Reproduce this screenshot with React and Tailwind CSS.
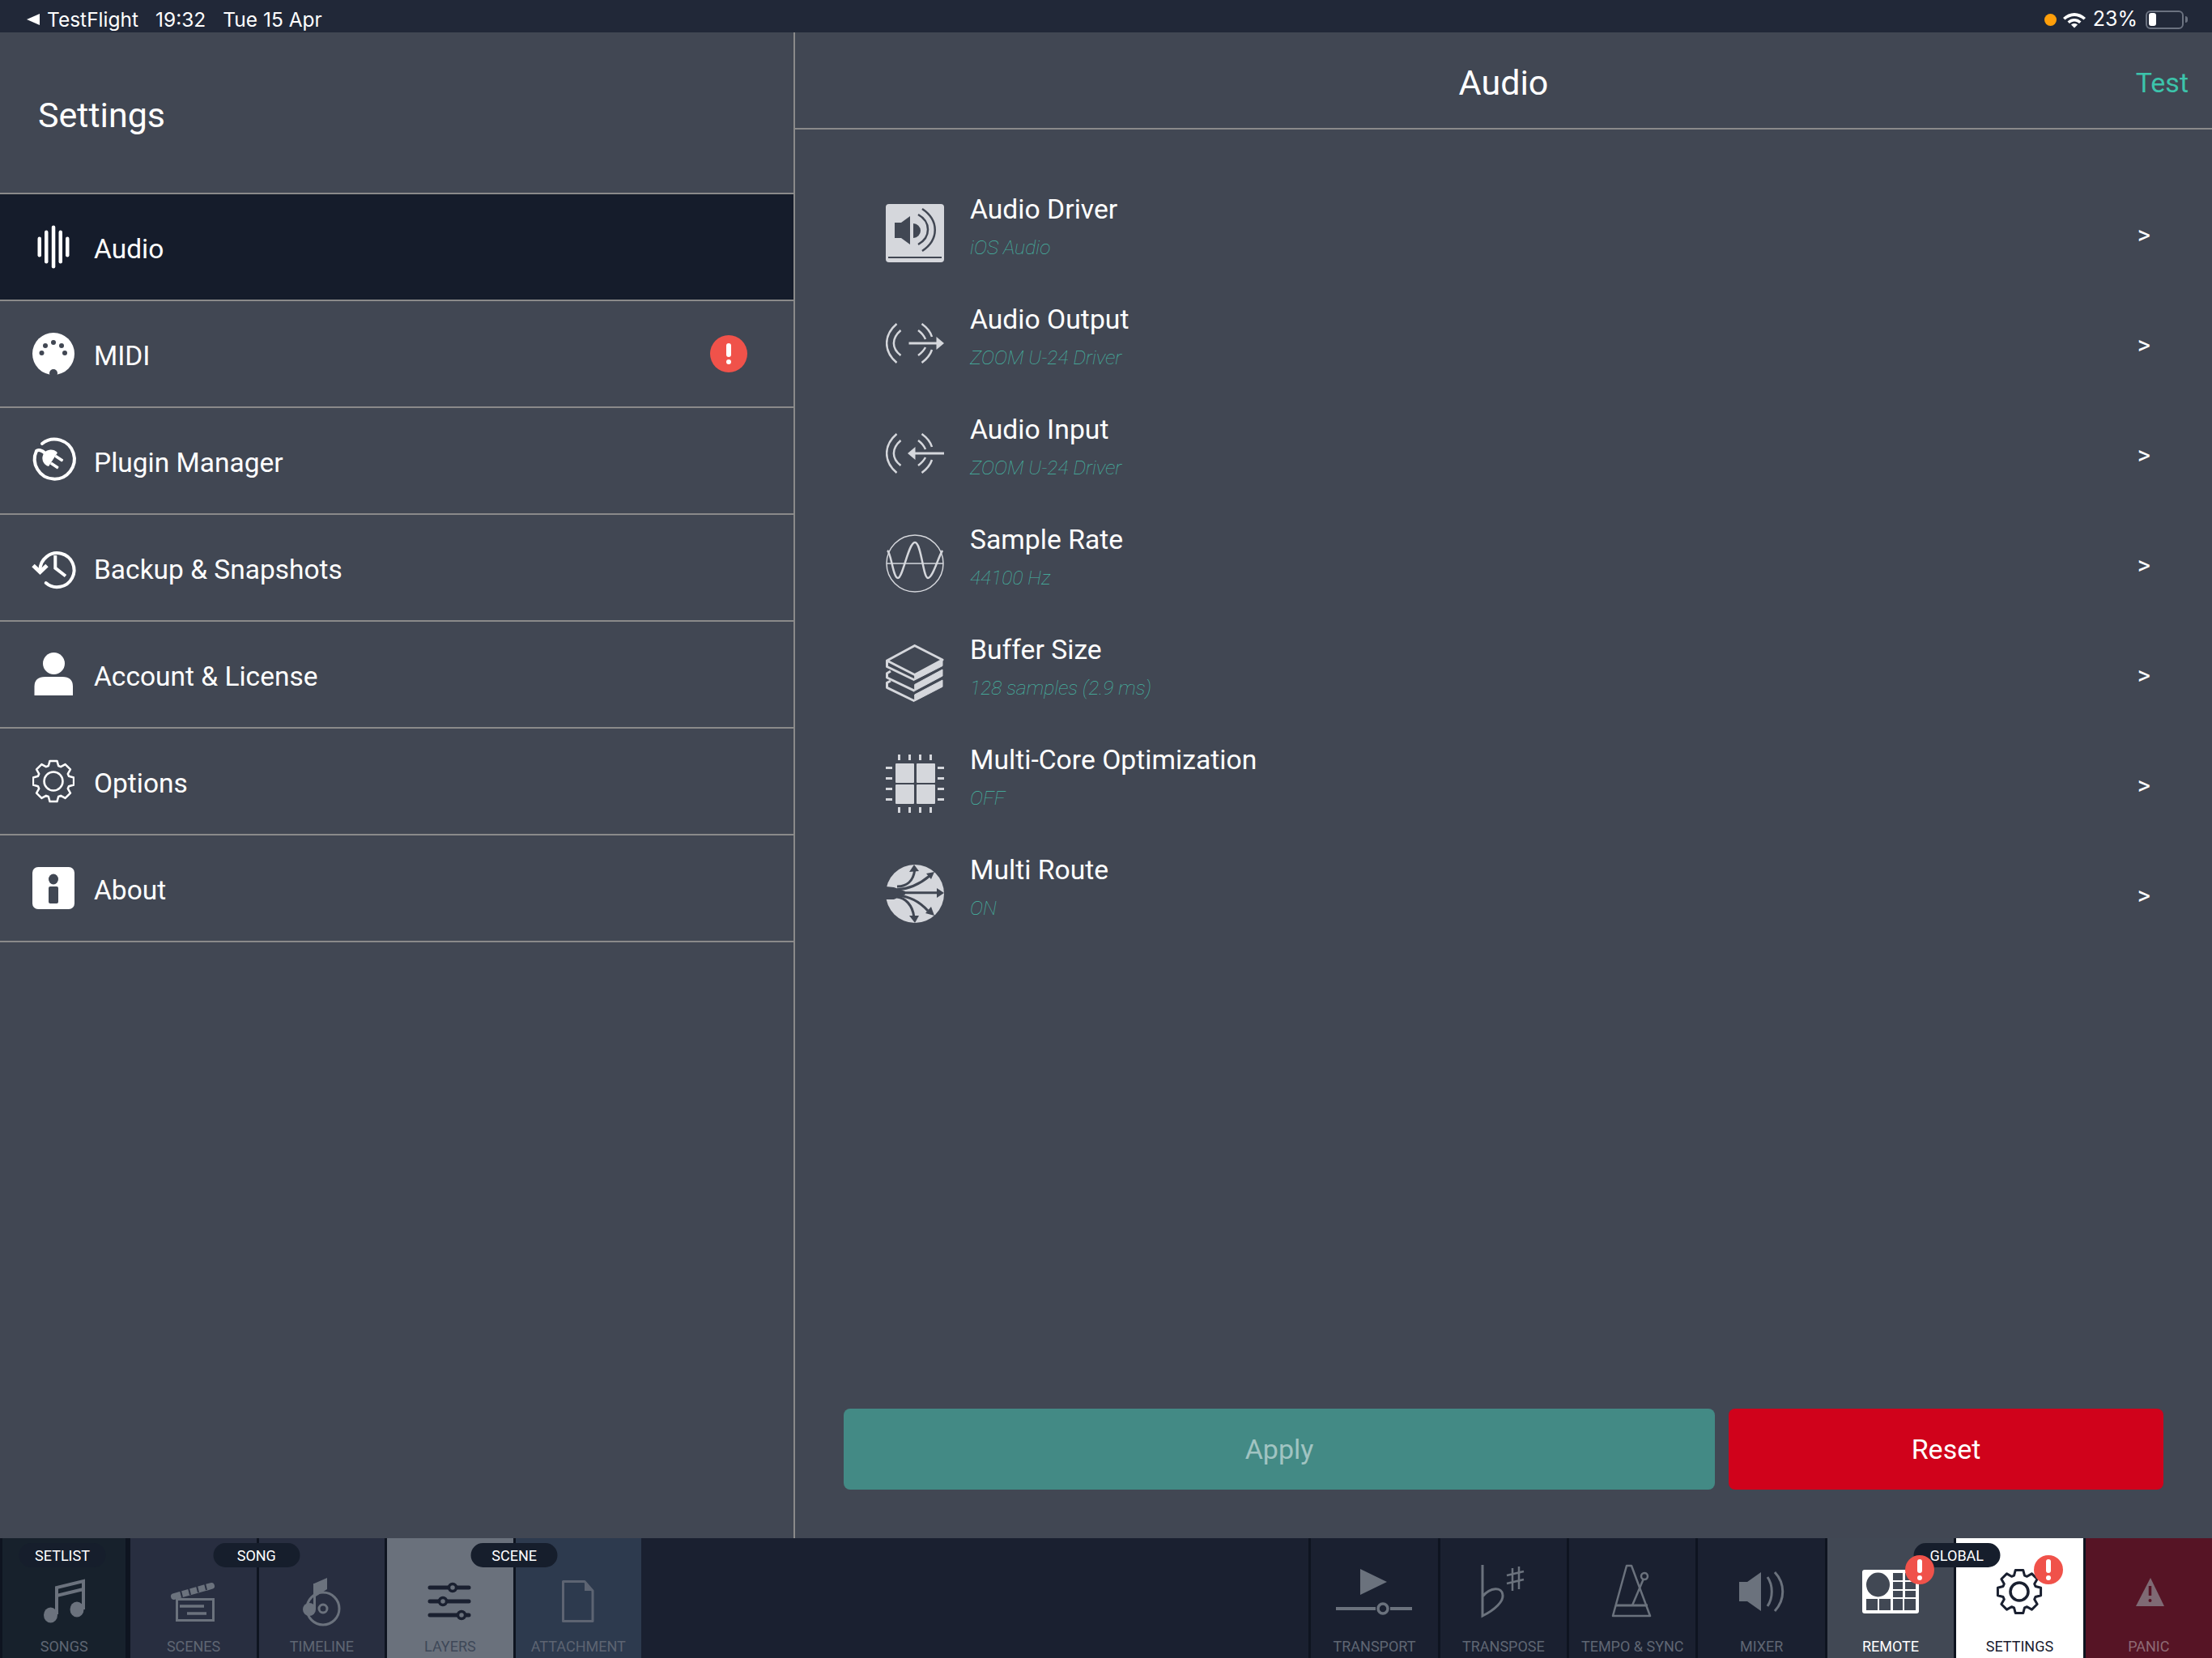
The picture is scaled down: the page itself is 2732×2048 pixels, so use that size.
import { Fragment } from "react";

// gear outline used by Options + Settings
function gearPath(cx, cy, rOut, rIn, teeth) {
  const pts = [];
  const step = (Math.PI * 2) / teeth;
  for (let i = 0; i < teeth; i++) {
    const a = i * step - Math.PI / 2;
    const d = [
      [-0.5, rIn],
      [-0.28, rOut],
      [0.28, rOut],
      [0.5, rIn],
    ];
    d.forEach(([k, r]) => {
      const t = a + k * step * 0.8;
      pts.push(`${(cx + Math.cos(t) * r).toFixed(2)} ${(cy + Math.sin(t) * r).toFixed(2)}`);
    });
  }
  return "M" + pts.join("L") + "Z";
}

const BG = "#414753";

/* ---------- left menu icons, 52 box ---------- */
const AudioIcon = () => (
  <svg width="52" height="54" viewBox="0 0 52 54" fill="#fff">
    <rect x="6.500" y="14.500" width="4.500" height="25" rx="2.200" />
    <rect x="15" y="6.500" width="4.500" height="41" rx="2.200" />
    <rect x="23.800" y="0.500" width="4.500" height="53" rx="2.200" />
    <rect x="32.500" y="6.500" width="4.500" height="41" rx="2.200" />
    <rect x="41" y="14.500" width="4.500" height="25" rx="2.200" />
  </svg>
);
const MidiIcon = () => (
  <svg width="52" height="52" viewBox="0 0 52 52">
    <circle cx="26" cy="26" r="26" fill="#fff" />
    <g fill={BG}>
      <circle cx="26" cy="12" r="3" />
      <circle cx="16" cy="16" r="3" />
      <circle cx="36" cy="16" r="3" />
      <circle cx="11.500" cy="25" r="3" />
      <circle cx="40" cy="25" r="3" />
      <circle cx="26" cy="50" r="5" />
    </g>
  </svg>
);
const PluginIcon = () => (
  <svg width="52" height="56" viewBox="0 0 52 56" fill="none" className="overflow-visible">
    <path d="M12 7 A24.500 24.500 0 1 1 5 16 C7 14 12 15 16 19" stroke="#fff" strokeWidth="4" strokeLinecap="round" />
    <g transform="translate(23 25) rotate(33)" fill="#fff">
      <path d="M3 -10 A10.500 10.500 0 1 0 3 10 Z" />
      <rect x="3" y="-7" width="11" height="3.500" rx="1" />
      <rect x="3" y="3.500" width="11" height="3.500" rx="1" />
    </g>
  </svg>
);
const BackupIcon = () => (
  <svg width="52" height="48" viewBox="0 0 52 48" fill="none" className="overflow-visible">
    <path d="M9.500 27 A21 21 0 1 1 16.700 43" stroke="#fff" strokeWidth="4" strokeLinecap="round" />
    <path d="M1 21.500 L9.500 29.500 L18 21.500" stroke="#fff" strokeWidth="5" />
    <path d="M28.300 9 V24.700 L41 34.500" stroke="#fff" strokeWidth="4" />
  </svg>
);
const AccountIcon = () => (
  <svg width="52" height="54" viewBox="0 0 52 54" fill="#fff">
    <ellipse cx="26.500" cy="13.500" rx="13.500" ry="13.500" />
    <path d="M2.500 53 V42 Q2.500 30 16 30 H37 Q50 30 50 42 V53 Z" />
  </svg>
);
const OptionsIcon = () => (
  <svg width="52" height="54" viewBox="0 0 52 54" fill="none" stroke="#fff" strokeWidth="2.500" strokeLinejoin="round">
    <path d={gearPath(26, 27, 25.5, 20, 8)} />
    <circle cx="26" cy="27" r="11.500" />
  </svg>
);
const AboutIcon = () => (
  <svg width="52" height="52" viewBox="0 0 52 52">
    <rect width="52" height="52" rx="7" fill="#fff" />
    <ellipse cx="26" cy="15" rx="6" ry="6.500" fill={BG} />
    <rect x="20" y="24" width="12" height="21" rx="2" fill={BG} />
  </svg>
);

/* ---------- audio list icons, 72 box ---------- */
const ICON = "#d5d7dc";

const DriverIcon = () => (
  <svg width="72" height="72" viewBox="0 0 72 72" fill="none">
    <rect width="72" height="72" rx="4" fill={ICON} />
    <rect x="3" y="65" width="66" height="2" fill={BG} />
    <path d="M11 23 H19 L30 15 V50 L19 42 H11 Z" fill={BG} />
    <path d="M34 24 A9 9 0 0 1 34 42 Z" fill={BG} />
    <g stroke={BG} strokeWidth="2.500">
      <path d="M40 13 C56 22 56 41 40 50" />
      <path d="M45 6 C66 20 66 44 45 58" />
    </g>
  </svg>
);
const ArcPair = () => (
  <g stroke={ICON} strokeWidth="2.500" fill="none">
    <path d="M13.500 12 C-3 26 -3 46 13.500 60" />
    <path d="M18.500 20 C7 30 7 42 18.500 51" />
    <path d="M44.500 12 C50 16 55 21 57 28" />
    <path d="M57 44 C55 50 50 56 44.500 60" />
    <path d="M40 20 C44 23 47 26 49 31" />
    <path d="M49 41 C47 45 44 48 40 51" />
  </g>
);
const OutputIcon = () => (
  <svg width="72" height="72" viewBox="0 0 72 72" fill="none">
    <ArcPair />
    <rect x="28.500" y="34.500" width="36" height="3" fill={ICON} />
    <path d="M62.500 28 L72 36 L62.500 44 Z" fill={ICON} />
  </svg>
);
const InputIcon = () => (
  <svg width="72" height="72" viewBox="0 0 72 72" fill="none">
    <ArcPair />
    <rect x="34" y="34.500" width="38" height="3" fill={ICON} />
    <path d="M36.500 28 L27 36 L36.500 44 Z" fill={ICON} />
  </svg>
);
const RateIcon = () => (
  <svg width="72" height="72" viewBox="0 0 72 72" fill="none" stroke={ICON}>
    <circle cx="36" cy="36" r="35" strokeWidth="1.500" />
    <path d="M1 36 H71" strokeWidth="1.500" />
    <path d="M2 20 C7 24 9 54 15 54 S28 10 36 10 S46 54 52 54 S64 30 70 20" strokeWidth="2.500" />
  </svg>
);
const BufferIcon = () => (
  <svg width="72" height="72" viewBox="0 0 72 72" fill="none" stroke={ICON} strokeWidth="3" strokeLinejoin="round">
    <path d="M35.700 1.500 L70 19 L35.700 37.500 L1.500 20 Z" />
    <path d="M1.500 20 V27.500 L35.700 44" />
    <path d="M35.700 37.500 L70 19 V26.500 L35.700 44 Z" fill={ICON} strokeWidth="1" />
    <path d="M6 33 L1.500 35.700 V41 L35.700 57.300" />
    <path d="M35.700 49.500 L70 31 V39 L35.700 57.300 Z" fill={ICON} strokeWidth="1" />
    <path d="M6 45 L1.500 47.300 V53.300 L35.700 70" />
    <path d="M35.700 62 L70 44 V52.300 L35.700 70 Z" fill={ICON} strokeWidth="1" />
  </svg>
);
const CoreIcon = () => (
  <svg width="72" height="72" viewBox="0 0 72 72" fill={ICON}>
    <rect x="12" y="11" width="23" height="24" rx="1" />
    <rect x="38" y="11" width="23" height="24" rx="1" />
    <rect x="12" y="37" width="23" height="24" rx="1" />
    <rect x="38" y="37" width="23" height="24" rx="1" />
    {[15, 28, 41, 54].map((p) => (
      <Fragment key={p}>
        <rect x={p} y="0" width="3" height="7" />
        <rect x={p} y="65" width="3" height="7" />
        <rect x="0" y={p} width="8" height="3" />
        <rect x="64" y={p} width="8" height="3" />
      </Fragment>
    ))}
  </svg>
);
const RouteIcon = () => (
  <svg width="72" height="72" viewBox="0 0 72 72" fill="none">
    <circle cx="36" cy="36" r="36" fill={ICON} />
    <path d="M0 27 L10 28 L24 33 V37 L10 43 L0 43 Z" fill={BG} />
    <g stroke={BG} strokeWidth="3">
      <path d="M14 27 C26 27 34 20 35.700 7" />
      <path d="M14 30.700 C30 30 42 24 54 14" />
      <path d="M14 34.700 H66" />
      <path d="M14 38 C30 39 42 46 52 57" />
      <path d="M14 40 C24 41 33 50 34.700 64" />
    </g>
    <g fill={BG}>
      <path d="M35 0 L29 9 L41 8 Z" />
      <path d="M60 9 L50 11 L56 18 Z" />
      <path d="M72 35 L63 29 V41 Z" />
      <path d="M60 63 L56 52 L49 60 Z" />
      <path d="M36 72 L29 63 H41 Z" />
    </g>
  </svg>
);

/* ---------- bottom bar icons, drawn in 100x84 box ---------- */
const NavSvg = ({ children, ...p }) => (
  <svg width="100" height="84" viewBox="0 -14 100 84" fill="none" {...p}>
    {children}
  </svg>
);
const G = "#6b727d";
const SongsIcon = () => (
  <NavSvg>
    <ellipse cx="33.500" cy="49" rx="8.500" ry="9.500" fill={G} />
    <ellipse cx="66" cy="42" rx="8.500" ry="9.500" fill={G} />
    <path d="M41 48 V15 L74 7 V42 M41 25 L74 17" stroke={G} strokeWidth="4" />
  </NavSvg>
);
const ScenesIcon = () => (
  <NavSvg>
    <rect x="29.500" y="29.500" width="45" height="26" stroke={G} strokeWidth="3" />
    <path d="M33 38 H63 M42 47 H66" stroke={G} strokeWidth="3.500" />
    <path d="M26 26 L72 13" stroke={G} strokeWidth="8" strokeLinecap="round" />
    <path d="M36 27 L34 19 M46 24 L44 16 M56 21 L54 13 M66 18 L64 10" stroke="#282e40" strokeWidth="2" />
  </NavSvg>
);
const TimelineIcon = () => (
  <NavSvg>
    <circle cx="52" cy="41" r="20" stroke={G} strokeWidth="3" />
    <circle cx="52" cy="41" r="5" stroke={G} strokeWidth="3" />
    <circle cx="35" cy="42" r="8" fill={G} />
    <path d="M41 42 V10 L57 3 V17 L43 26" fill={G} />
    <path d="M41.500 42 V10" stroke={G} strokeWidth="3" />
  </NavSvg>
);
const LayersIcon = () => (
  <NavSvg>
    <g stroke="#1a2030" strokeWidth="5" strokeLinecap="round">
      <path d="M25 15 H73 M25 32 H73 M25 49 H73" />
    </g>
    {[[53, 15], [41, 32], [64, 49]].map(([x, y]) => (
      <circle key={x} cx={x} cy={y} r="4.500" fill="#6a717c" stroke="#1a2030" strokeWidth="3.500" />
    ))}
  </NavSvg>
);
const AttachmentIcon = () => (
  <NavSvg>
    <path d="M31.500 7.500 H58 L68 19 V56.500 H31.500 Z" stroke="#5d6472" strokeWidth="3" strokeLinejoin="round" />
    <path d="M58 8 V19 H68 Z" fill="#5d6472" />
  </NavSvg>
);
const TransportIcon = () => (
  <NavSvg>
    <path d="M33 -8 L66 8 L33 24 Z" fill={G} />
    <path d="M3 41 H52 M70 41 H97" stroke={G} strokeWidth="4" />
    <circle cx="61" cy="41" r="6" stroke={G} strokeWidth="3.500" />
  </NavSvg>
);
const TransposeIcon = () => (
  <NavSvg>
    <path d="M24 -13 V50 C40 42 50 32 49 24 C48 14 34 14 24 26" stroke={G} strokeWidth="3" />
    <path d="M61 -9 V19 M69 -11 V17 M54 0 L75 -5 M54 10 L75 5" stroke={G} strokeWidth="2.500" />
  </NavSvg>
);
const TempoIcon = () => (
  <NavSvg>
    <path d="M43 -12 H49 L72 50 H26 Z" stroke={G} strokeWidth="2.500" strokeLinejoin="round" />
    <path d="M29 37 H69" stroke={G} strokeWidth="3" />
    <path d="M50 37 L64 4" stroke={G} strokeWidth="2.500" />
    <circle cx="65" cy="1" r="4" stroke={G} strokeWidth="2.500" fill="#1a2030" />
  </NavSvg>
);
const MixerIcon = () => (
  <NavSvg>
    <path d="M22 8 H32 L49 -4 V44 L32 32 H22 Z" fill={G} />
    <path d="M57 2 C64 12 64 28 57 38 M66 -4 C79 10 79 30 66 44" stroke={G} strokeWidth="3" />
  </NavSvg>
);
const RemoteIcon = () => (
  <NavSvg>
    <rect x="15" y="-7" width="70" height="54" rx="3" fill="#fff" />
    <g fill="#414854">
      <ellipse cx="34.500" cy="11.500" rx="14.500" ry="15" />
      <rect x="53" y="-3" width="12" height="9" />
      <rect x="68" y="-3" width="13" height="9" />
      <rect x="53" y="8" width="12" height="9" />
      <rect x="68" y="8" width="13" height="9" />
      <rect x="53" y="19" width="12" height="8" />
      <rect x="68" y="19" width="13" height="8" />
      <rect x="20" y="29" width="14" height="14" />
      <rect x="36" y="29" width="14" height="14" />
      <rect x="53" y="29" width="12" height="14" />
      <rect x="67" y="29" width="14" height="14" />
    </g>
  </NavSvg>
);
const SettingsIcon = () => (
  <NavSvg>
    <path d={gearPath(50, 20, 27, 21, 8)} stroke="#1a2030" strokeWidth="3" strokeLinejoin="round" />
    <circle cx="50" cy="20" r="11" stroke="#1a2030" strokeWidth="3.500" />
  </NavSvg>
);
const PanicIcon = () => (
  <NavSvg>
    <path d="M52 3 L69 38 H34 Z" fill="#7f6a74" />
    <path d="M51.500 13 V25" stroke="#561425" strokeWidth="3.500" />
    <circle cx="51.500" cy="31" r="2" fill="#561425" />
  </NavSvg>
);

const AlertDot = ({ className }) => (
  <div className={`flex items-center justify-center rounded-full bg-[#f0524a] ${className}`}>
    <svg width="10" height="26" viewBox="0 0 10 26" fill="#fff">
      <rect x="2" y="0" width="6" height="17" rx="3" />
      <circle cx="5" cy="23" r="3" />
    </svg>
  </div>
);

const MENU = [
  { label: "Audio", icon: AudioIcon, active: true },
  { label: "MIDI", icon: MidiIcon, alert: true },
  { label: "Plugin Manager", icon: PluginIcon },
  { label: "Backup & Snapshots", icon: BackupIcon },
  { label: "Account & License", icon: AccountIcon },
  { label: "Options", icon: OptionsIcon },
  { label: "About", icon: AboutIcon },
];

const ROWS = [
  { title: "Audio Driver", sub: "iOS Audio", icon: DriverIcon },
  { title: "Audio Output", sub: "ZOOM U-24 Driver", icon: OutputIcon },
  { title: "Audio Input", sub: "ZOOM U-24 Driver", icon: InputIcon },
  { title: "Sample Rate", sub: "44100 Hz", icon: RateIcon },
  { title: "Buffer Size", sub: "128 samples (2.9 ms)", icon: BufferIcon },
  { title: "Multi-Core Optimization", sub: "OFF", icon: CoreIcon },
  { title: "Multi Route", sub: "ON", icon: RouteIcon },
];

function NavCell({ label, icon: Icon, bg, text, width = "w-[159.4px]", children }) {
  return (
    <div className={`relative flex shrink-0 flex-col items-center border-l-[3px] border-[#0e1420] pt-[32px] ${width} ${bg}`}>
      <Icon />
      <span className={`mt-[8px] text-[18px] leading-[20px] whitespace-nowrap ${text}`}>{label}</span>
      {children}
    </div>
  );
}

const Pill = ({ children, left = "left-1/2" }) => (
  <div className={`absolute top-[6px] flex h-[30px] w-[107px] -translate-x-1/2 items-center justify-center rounded-full bg-[#161e2c] pt-[1px] text-[18px] text-white ${left}`}>
    {children}
  </div>
);

export default function App() {
  return (
    <div className="flex h-[2048px] w-[2732px] flex-col overflow-hidden bg-[#414753] text-white [font-family:Roboto,sans-serif]">
      {/* status bar */}
      <div className="flex h-[40px] shrink-0 items-center bg-[#212838] pl-[33px] pr-[30px] pt-[8px] text-[24.500px] [font-family:Inter,sans-serif]">
        <svg width="16" height="14" viewBox="0 0 16 14" fill="#fff">
          <path d="M16 0 V14 L0 7 Z" />
        </svg>
        <span className="ml-[9px]">TestFlight</span>
        <span className="ml-[21px]">19:32</span>
        <span className="ml-[21px]">Tue 15 Apr</span>
        <div className="ml-auto h-[15px] w-[15px] rounded-full bg-[#ff9f0a]" />
        <svg className="ml-[8px]" width="28" height="22" viewBox="0 0 28 22" fill="#fff">
          <path d="M14 3 C19 3 24 5 28 9 L25.500 11.500 C22 8.500 18 7 14 7 C10 7 6 8.500 2.500 11.500 L0 9 C4 5 9 3 14 3 Z" />
          <path d="M14 10 C17 10 20 11 22.500 13.500 L20 16 C18.500 14.500 16 13.500 14 13.500 C12 13.500 9.500 14.500 8 16 L5.500 13.500 C8 11 11 10 14 10 Z" />
          <path d="M14 16 C15.500 16 17 16.500 18 17.500 L14 21.500 L10 17.500 C11 16.500 12.500 16 14 16 Z" />
        </svg>
        <span className="ml-[9px] text-[25px]">23%</span>
        <div className="ml-[10px] flex h-[23px] w-[47px] items-center rounded-[6px] border-2 border-[#6b7280] pl-[2px]">
          <div className="h-[16px] w-[9px] rounded-[3px] bg-white" />
        </div>
        <div className="ml-[2px] h-[8px] w-[3px] rounded-r-sm bg-[#6b7280]" />
      </div>

      <div className="flex min-h-0 flex-1">
        {/* left menu */}
        <div className="w-[982px] shrink-0 border-r-2 border-[#8a8a8a]">
          <div className="flex h-[200px] items-center border-b-2 border-[#8a8a8a] pl-[47px] pt-[6px] text-[43px]">Settings</div>
          {MENU.map(({ label, icon: Icon, active, alert }) => (
            <div
              key={label}
              className={`flex h-[132px] items-center border-b-2 border-[#8a8a8a] pl-[40px] pr-[57px] text-[33.500px] ${active ? "bg-[#151c2b]" : ""}`}
            >
              <div className="flex w-[52px] justify-center">
                <Icon />
              </div>
              <span className="ml-[24px] pt-[6px]">{label}</span>
              {alert && <AlertDot className="ml-auto h-[46px] w-[46px]" />}
            </div>
          ))}
        </div>

        {/* audio settings */}
        <div className="flex min-w-0 flex-1 flex-col">
          <div className="grid h-[120px] shrink-0 grid-cols-[1fr_auto_1fr] items-center border-b-2 border-[#8a8a8a] text-[43px]">
            <span />
            <span className="pt-[6px]">Audio</span>
            <span className="justify-self-end pr-[29px] pt-[6px] text-[34px] text-[#3cc4ab]">Test</span>
          </div>
          <div className="flex flex-1 flex-col pt-[60px]">
            {ROWS.map(({ title, sub, icon: Icon }) => (
              <div key={title} className="flex h-[136px] items-start pl-[112px] pr-[76px] pt-[16px]">
                <div className="mt-[16px] shrink-0">
                  <Icon />
                </div>
                <div className="ml-[32px]">
                  <div className="h-[47px] text-[33.700px] leading-[46px]">{title}</div>
                  <div className="h-[46px] text-[24.700px] font-thin italic leading-[46px] text-[#45b8a4]">{sub}</div>
                </div>
                <span className="mb-[10px] ml-auto self-center text-[31px]">&gt;</span>
              </div>
            ))}
          </div>
          <div className="flex gap-[17px] pb-[60px] pl-[60px] pr-[60px]">
            <button className="flex h-[100px] flex-1 items-center justify-center rounded-[8px] bg-[#438a85] text-[34px] text-white/50">Apply</button>
            <button className="flex h-[100px] w-[537px] items-center justify-center rounded-[8px] bg-[#d0021b] text-[34px] text-white">Reset</button>
          </div>
        </div>
      </div>

      {/* bottom bar */}
      <div className="flex h-[148px] shrink-0 bg-[#1a2030]">
        <div className="relative flex">
          <NavCell label="SONGS" icon={SongsIcon} width="w-[158.4px]" bg="bg-[#17212c] border-l-0 border-r-[3px]" text="text-[#5f6673]" />
          <Pill left="left-[77px]">SETLIST</Pill>
        </div>
        <div className="relative flex">
          <NavCell label="SCENES" icon={ScenesIcon} width="w-[158.4px]" bg="bg-[#282e40]" text="text-[#5f6673]" />
          <NavCell label="TIMELINE" icon={TimelineIcon} width="w-[158.4px]" bg="bg-[#282e40]" text="text-[#5f6673]" />
          <Pill>SONG</Pill>
        </div>
        <div className="relative flex">
          <NavCell label="LAYERS" icon={LayersIcon} width="w-[158.4px]" bg="bg-[#6a717c]" text="text-[#3e4858]" />
          <NavCell label="ATTACHMENT" icon={AttachmentIcon} width="w-[158.4px]" bg="bg-[#2d3a4e]" text="text-[#5d6472]" />
          <Pill left="left-[160px]">SCENE</Pill>
        </div>
        <div className="flex-1" />
        <NavCell label="TRANSPORT" icon={TransportIcon} bg="bg-[#1a2030]" text="text-[#5f6673]" />
        <NavCell label="TRANSPOSE" icon={TransposeIcon} bg="bg-[#1a2030]" text="text-[#5f6673]" />
        <NavCell label="TEMPO & SYNC" icon={TempoIcon} bg="bg-[#1a2030]" text="text-[#5f6673]" />
        <NavCell label="MIXER" icon={MixerIcon} bg="bg-[#1a2030]" text="text-[#5f6673]" />
        <div className="relative flex">
          <NavCell label="REMOTE" icon={RemoteIcon} bg="bg-[#414854]" text="text-white">
            <AlertDot className="absolute left-[96px] top-[21px] z-10 h-[36px] w-[36px]" />
          </NavCell>
          <NavCell label="SETTINGS" icon={SettingsIcon} bg="bg-white" text="text-[#1a2030]">
            <AlertDot className="absolute left-[96px] top-[21px] z-10 h-[36px] w-[36px]" />
          </NavCell>
          <Pill left="left-[163px]">GLOBAL</Pill>
        </div>
        <NavCell label="PANIC" icon={PanicIcon} bg="bg-[#561425]" text="text-[#8e6a74]" />
      </div>
    </div>
  );
}
